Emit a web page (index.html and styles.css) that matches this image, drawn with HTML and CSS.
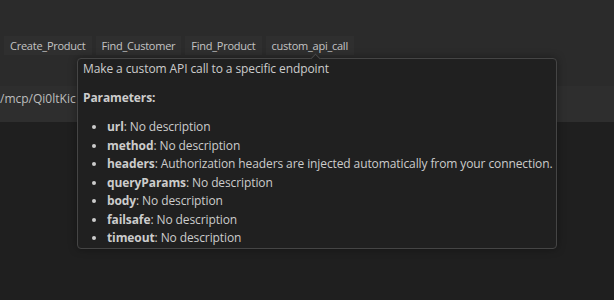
FILE: index.html
```html
<!DOCTYPE html>
<html lang="en">
<head>
    <meta charset="UTF-8">
    <meta name="viewport" content="width=device-width, initial-scale=1.0">
    <title>MCP Tools</title>
    <link rel="stylesheet" href="styles.css">
</head>
<body>
    <div class="panel">
        <div class="tool-list">
            <span class="tool-chip">Create_Product</span>
            <span class="tool-chip">Find_Customer</span>
            <span class="tool-chip">Find_Product</span>
            <span class="tool-chip active">custom_api_call</span>
        </div>
        <div class="url-row">
            <span class="url-text">/mcp/Qi0ltKic</span>
        </div>
    </div>

    <div class="hover">
        <p>Make a custom API call to a specific endpoint</p>
        <p><strong>Parameters:</strong></p>
        <ul>
            <li><strong>url</strong>: No description</li>
            <li><strong>method</strong>: No description</li>
            <li><strong>headers</strong>: Authorization headers are injected automatically from your connection.</li>
            <li><strong>queryParams</strong>: No description</li>
            <li><strong>body</strong>: No description</li>
            <li><strong>failsafe</strong>: No description</li>
            <li><strong>timeout</strong>: No description</li>
        </ul>
    </div>
</body>
</html>
```

FILE: styles.css
```css
:root {
    --panel-bg: #2b2b2b;
    --chip-bg: #2f2f2f;
    --page-bg: #1f1f1f;
    --hover-bg: #202020;
    --hover-border: #454545;
    --text-color: #cccccc;
}

* {
    margin: 0;
    padding: 0;
    box-sizing: border-box;
}

body {
    background-color: var(--page-bg);
    color: var(--text-color);
    font-family: 'Open Sans', 'Noto Sans', sans-serif;
    height: 300px;
    overflow: hidden;
    position: relative;
}

.panel {
    background-color: var(--panel-bg);
    height: 122px;
    padding-top: 36px;
    display: flex;
    flex-direction: column;
}

.tool-list {
    display: flex;
    gap: 4px;
    padding-left: 4px;
}

.tool-chip {
    background-color: var(--chip-bg);
    height: 19px;
    line-height: 19px;
    padding: 0 6px;
    font-size: 11px;
    letter-spacing: -0.25px;
    color: #c4c4c4;
    white-space: nowrap;
}

.url-row {
    margin-top: 31px;
    height: 36px;
    display: flex;
    align-items: center;
    background-color: #2e2e2e;
    overflow: hidden;
}

.url-text {
    width: 76px;
    overflow: hidden;
    font-size: 12px;
    color: #bdbdbd;
    white-space: nowrap;
    margin-top: -12px;
}

.hover {
    position: absolute;
    left: 77px;
    top: 58px;
    width: 480px;
    height: 191px;
    background-color: var(--hover-bg);
    border: 1px solid var(--hover-border);
    border-radius: 4px;
    box-shadow: 0 0 8px rgba(0, 0, 0, 0.36);
    padding: 1px 5px 0;
    font-size: 12px;
    line-height: 18.5px;
    letter-spacing: -0.1px;
}

.hover::before {
    content: '';
    position: absolute;
    top: -4px;
    left: 234px;
    width: 6px;
    height: 6px;
    background-color: var(--hover-bg);
    border-left: 1px solid var(--hover-border);
    border-top: 1px solid var(--hover-border);
    transform: rotate(45deg);
}

.hover p {
    margin-bottom: 10.5px;
}

.hover strong {
    font-weight: 700;
}

.hover ul {
    padding-left: 24px;
}

.hover li {
    white-space: nowrap;
}
```
